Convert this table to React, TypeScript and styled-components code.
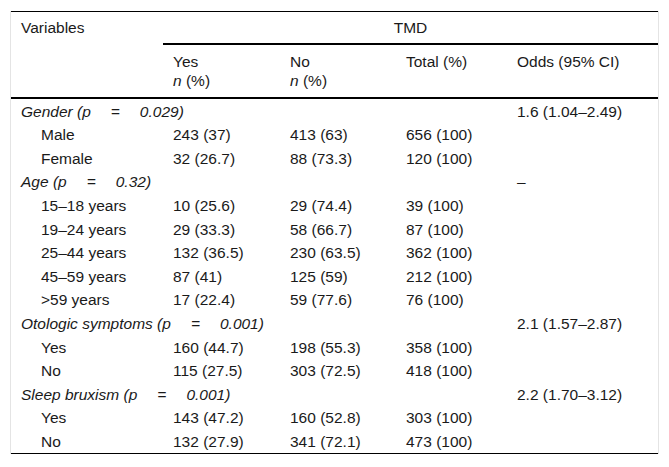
import React from "react";
import styled, { createGlobalStyle } from "styled-components";

const GlobalStyle = createGlobalStyle`
  html, body {
    margin: 0;
    padding: 0;
    background: #ffffff;
  }
  body {
    font-family: "Liberation Sans", Arial, Helvetica, sans-serif;
    color: #1a1a1a;
  }
`;

const Page = styled.div`
  padding: 11px 10px 12px 10px;
`;

const TableWrap = styled.div`
  width: 647px;
  border-left: 1px solid #e4e4e4;
  border-right: 1px solid #e4e4e4;
`;

const Table = styled.table`
  width: 647px;
  border-collapse: collapse;
  table-layout: fixed;
  font-size: 15.5px;
  line-height: 19px;
  border-top: 1px solid #000;
  border-bottom: 1px solid #000;
`;

const HeadCell = styled.th<{ $center?: boolean; $rule?: boolean; $pad?: number }>`
  font-weight: normal;
  text-align: ${(p) => (p.$center ? "center" : "left")};
  vertical-align: top;
  padding: ${(p) => p.$pad ?? 6}px 10px;
  border-bottom: ${(p) => (p.$rule ? "2px solid #000" : "none")};
`;

const HeadRow = styled.tr<{ $rule?: boolean }>`
  border-bottom: ${(p) => (p.$rule ? "2px solid #000" : "none")};
`;

const Cell = styled.td<{ $indent?: boolean; $italic?: boolean }>`
  height: 19px;
  padding: 2.6px 10px 2px ${(p) => (p.$indent ? 30 : 10)}px;
  font-style: ${(p) => (p.$italic ? "italic" : "normal")};
  white-space: nowrap;
  vertical-align: top;
`;

const Eq = styled.span`
  padding: 0 20px;
`;

type Group = {
  label: string;
  p: string;
  odds: string;
  rows: [string, string, string, string][];
};

const groups: Group[] = [
  {
    label: "Gender",
    p: "0.029",
    odds: "1.6 (1.04–2.49)",
    rows: [
      ["Male", "243 (37)", "413 (63)", "656 (100)"],
      ["Female", "32 (26.7)", "88 (73.3)", "120 (100)"],
    ],
  },
  {
    label: "Age",
    p: "0.32",
    odds: "–",
    rows: [
      ["15–18 years", "10 (25.6)", "29 (74.4)", "39 (100)"],
      ["19–24 years", "29 (33.3)", "58 (66.7)", "87 (100)"],
      ["25–44 years", "132 (36.5)", "230 (63.5)", "362 (100)"],
      ["45–59 years", "87 (41)", "125 (59)", "212 (100)"],
      [">59 years", "17 (22.4)", "59 (77.6)", "76 (100)"],
    ],
  },
  {
    label: "Otologic symptoms",
    p: "0.001",
    odds: "2.1 (1.57–2.87)",
    rows: [
      ["Yes", "160 (44.7)", "198 (55.3)", "358 (100)"],
      ["No", "115 (27.5)", "303 (72.5)", "418 (100)"],
    ],
  },
  {
    label: "Sleep bruxism",
    p: "0.001",
    odds: "2.2 (1.70–3.12)",
    rows: [
      ["Yes", "143 (47.2)", "160 (52.8)", "303 (100)"],
      ["No", "132 (27.9)", "341 (72.1)", "473 (100)"],
    ],
  },
];

export default function App() {
  return (
    <Page>
      <GlobalStyle />
      <TableWrap>
        <Table>
          <colgroup>
            <col style={{ width: 152 }} />
            <col style={{ width: 117 }} />
            <col style={{ width: 116 }} />
            <col style={{ width: 111 }} />
            <col style={{ width: 151 }} />
          </colgroup>
          <thead>
            <tr>
              <HeadCell rowSpan={2}>Variables</HeadCell>
              <HeadCell colSpan={4} $center $rule>
                TMD
              </HeadCell>
            </tr>
            <HeadRow $rule>
              <HeadCell $pad={7}>
                Yes
                <br />
                <i>n</i> (%)
              </HeadCell>
              <HeadCell $pad={7}>
                No
                <br />
                <i>n</i> (%)
              </HeadCell>
              <HeadCell $pad={7}>Total (%)</HeadCell>
              <HeadCell $pad={7}>Odds (95% CI)</HeadCell>
            </HeadRow>
          </thead>
          <tbody>
            {groups.map((g) => (
              <React.Fragment key={g.label}>
                <tr>
                  <Cell colSpan={4} $italic>
                    {g.label} (p<Eq>=</Eq>
                    {g.p})
                  </Cell>
                  <Cell>{g.odds}</Cell>
                </tr>
                {g.rows.map((r) => (
                  <tr key={g.label + r[0]}>
                    <Cell $indent>{r[0]}</Cell>
                    <Cell>{r[1]}</Cell>
                    <Cell>{r[2]}</Cell>
                    <Cell>{r[3]}</Cell>
                    <Cell />
                  </tr>
                ))}
              </React.Fragment>
            ))}
          </tbody>
        </Table>
      </TableWrap>
    </Page>
  );
}
